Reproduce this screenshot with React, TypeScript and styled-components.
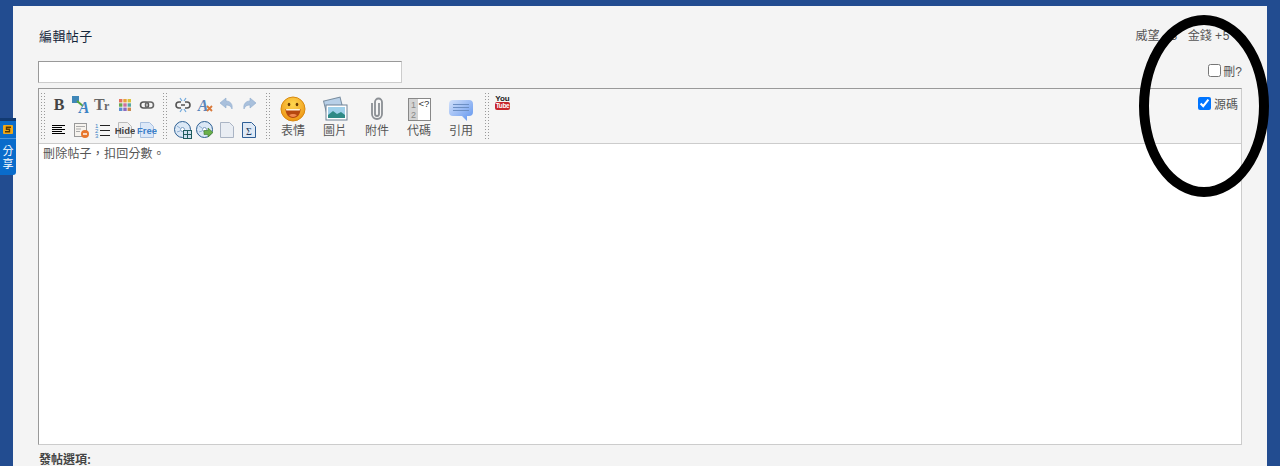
import React from 'react';
import styled, { createGlobalStyle } from 'styled-components';

const GlobalStyle = createGlobalStyle`
    html, body {
        margin: 0;
        padding: 0;
        height: 466px;
        overflow: hidden;
        background: #224c90;
    }
    body, input {
        font-family: "Liberation Sans", "Noto Sans CJK TC", sans-serif;
        font-size: 12px;
        color: #444;
    }
`;

const Page = styled.div`
    height: 466px;
    padding: 6px 13px 0;
    box-sizing: border-box;
    overflow: hidden;
`;

const Panel = styled.main`
    height: 460px;
    padding: 0 25px;
    background: #f4f4f4;
    overflow: hidden;
`;

const Header = styled.header`
    display: flex;
    justify-content: space-between;
    align-items: flex-start;
    height: 55px;
    box-sizing: border-box;
    padding: 22px 0 0 1px;
    line-height: 16px;
`;

const Title = styled.h1`
    margin: 1px 0 0;
    font-size: 13px;
    line-height: 16px;
    font-weight: normal;
    letter-spacing: 0.4px;
    color: #14263c;
`;

const Credits = styled.div`
    display: flex;
    gap: 10px;
    padding-right: 12px;
    color: #555;
`;

const CreditValue = styled.span`
    letter-spacing: 0.6px;
`;

const SubjectRow = styled.div`
    display: flex;
    justify-content: space-between;
    align-items: center;
    height: 22px;
    margin-bottom: 5px;
`;

const SubjectInput = styled.input`
    width: 364px;
    height: 22px;
    box-sizing: border-box;
    border: 1px solid #ccc;
    border-top-color: #999;
    border-left-color: #999;
    background: #fff;
    padding: 0 4px;
    outline: none;
`;

const CheckLabel = styled.label`
    display: flex;
    align-items: center;
    gap: 3px;
    color: #555;
`;

const DeleteToggle = styled(CheckLabel)`
    gap: 2px;
    margin-bottom: 3px;
`;

const CheckBox = styled.input`
    width: 13px;
    height: 13px;
    margin: 0;
`;

const Editor = styled.section`
    width: 1204px;
    height: 357px;
    box-sizing: border-box;
    border: 1px solid #ccc;
    border-top-color: #999;
    border-left-color: #999;
    display: flex;
    flex-direction: column;
`;

const Toolbar = styled.div`
    height: 55px;
    flex: none;
    box-sizing: border-box;
    display: flex;
    align-items: stretch;
    padding: 3px 3px 0 2px;
    background: #f5f5f5;
    border-bottom: 1px solid #ccc;
`;

const Grip = styled.span<{ $left: number; $right: number }>`
    width: 4px;
    height: 46px;
    margin: 1px ${(p) => p.$right}px 0 ${(p) => p.$left}px;
    flex: none;
    background-image: radial-gradient(circle at 0.5px 0.5px, #9a9a9a 0.7px, transparent 0.8px);
    background-size: 3px 3px;
`;

const SmallGroup = styled.div<{ $cols: number }>`
    display: grid;
    grid-template-columns: repeat(${(p) => p.$cols}, 22px);
    grid-auto-rows: 25px;
`;

const SmallCell = styled.span`
    display: flex;
    align-items: center;
    justify-content: center;
`;

const BigGroup = styled.div`
    display: flex;
`;

const BigButton = styled.span`
    width: 42px;
    display: flex;
    flex-direction: column;
    align-items: center;
    gap: 2px;
    color: #555;
    line-height: 14px;
    padding-top: 3px;
`;

const BigIcon = styled.span`
    height: 27px;
    display: flex;
    align-items: center;
`;

const YouTube = styled.span`
    width: 15px;
    display: flex;
    flex-direction: column;
    align-items: center;
    font-weight: bold;
    font-size: 8px;
    line-height: 7px;
    color: #222;
    margin-top: 3px;
`;

const TubeBadge = styled.span`
    display: block;
    background: #c8262c;
    color: #fff;
    font-size: 6.5px;
    letter-spacing: -0.4px;
    line-height: 8px;
    padding: 0 1px;
    border-radius: 2px;
`;

const SourceToggle = styled(CheckLabel)`
    margin-left: auto;
    align-self: flex-start;
    height: 14px;
    margin-top: 4px;
`;

const Body = styled.div`
    flex: 1;
    background: #fff;
    padding: 2px 4px;
    line-height: 16px;
    letter-spacing: 0.2px;
    color: #555;
`;

const OptionsTitle = styled.h2`
    margin: 8px 0 0;
    padding-left: 1px;
    font-size: 12px;
    line-height: 14px;
    font-weight: bold;
    color: #444;
`;

const ShareTab = styled.aside`
    position: absolute;
    left: 0;
    top: 118px;
    width: 16px;
    height: 57px;
    box-sizing: border-box;
    border-top: 3px solid #123a72;
    border-radius: 0 0 3px 0;
    background: #0a6ccb;
    color: #fff;
    display: flex;
    flex-direction: column;
    align-items: center;
    font-size: 11px;
    line-height: 13px;
`;

const ShareLogo = styled.span`
    display: flex;
    align-items: center;
    justify-content: center;
    width: 100%;
    height: 17px;
    border-bottom: 1px solid #4b95dc;
    margin-bottom: 6px;
`;

const Annotation = styled.div`
    position: absolute;
    left: 1139px;
    top: 15px;
    width: 130px;
    height: 182px;
    box-sizing: border-box;
    border: 10px solid #000;
    border-radius: 50%;
    pointer-events: none;
`;

const Svg = ({ w = 20, h = 20, children }: { w?: number; h?: number; children: React.ReactNode }) => (
    <svg width={w} height={h} viewBox={`0 0 ${w} ${h}`}>
        {children}
    </svg>
);

const Disc = () => (
    <>
        <circle cx="9.500" cy="9.500" r="8" fill="#dbe8f6" stroke="#2c5f92" />
        <circle cx="9.500" cy="9.500" r="2" fill="#fff" stroke="#7a9cc0" />
        <path d="M4 6l3 2M4 12l3-1" stroke="#8fb0d4" />
    </>
);

const Doc = ({ fill, stroke }: { fill: string; stroke: string }) => (
    <path d="M3.500 2.500h9l4 4v11h-13z" fill={fill} stroke={stroke} />
);

const firstGroup: React.ReactNode[] = [
    <Svg key="bold">
        <text x="10" y="15" textAnchor="middle" fontFamily="Liberation Serif" fontWeight="bold" fontSize="16" fill="#444">B</text>
    </Svg>,
    <Svg key="translate">
        <rect x="1" y="1" width="7" height="7" fill="#3f87b8" />
        <path d="M6 6l6 5" stroke="#5aa63c" strokeWidth="2" />
        <text x="13" y="18" textAnchor="middle" fontFamily="Liberation Serif" fontWeight="bold" fontStyle="italic" fontSize="16" fill="#3c83c4">A</text>
    </Svg>,
    <Svg key="size">
        <text x="1" y="15" fontFamily="Liberation Serif" fontWeight="bold" fontSize="16" fill="#666">T</text>
        <text x="11" y="15" fontFamily="Liberation Serif" fontWeight="bold" fontSize="12" fill="#666">r</text>
    </Svg>,
    <Svg key="color">
        {['#e2705c', '#e8a33c', '#d8c23c', '#6aa84f', '#cc6fa0', '#58a8a0', '#5c8fd0', '#8a6cc0', '#c88a50'].map((c, i) => (
            <rect key={c} x={4 + (i % 3) * 4.3} y={4 + Math.floor(i / 3) * 4.3} width="3.4" height="3.4" fill={c} />
        ))}
    </Svg>,
    <Svg key="link">
        <rect x="3.500" y="7" width="8" height="6" rx="3" fill="none" stroke="#555" strokeWidth="1.6" />
        <rect x="8.500" y="7" width="8" height="6" rx="3" fill="none" stroke="#666" strokeWidth="1.6" />
    </Svg>,
    <Svg key="align">
        <path d="M3 5.500h13M3 7.500h10M3 9.500h13M3 11.500h10M3 13.500h13" stroke="#000" shapeRendering="crispEdges" />
    </Svg>,
    <Svg key="delete">
        <rect x="3.500" y="3.500" width="12" height="13" fill="#f6f3ee" stroke="#999" />
        <path d="M5 6.500h9M5 9h5M5 11.500h4" stroke="#aaa" />
        <circle cx="14" cy="14" r="4" fill="#e8762c" />
        <path d="M12 14h4" stroke="#fff" strokeWidth="1.4" />
    </Svg>,
    <Svg key="ordered">
        <text x="2" y="8" fontFamily="Liberation Sans" fontSize="6" fill="#3c83c4">1</text>
        <text x="2" y="13" fontFamily="Liberation Sans" fontSize="6" fill="#3c83c4">2</text>
        <text x="2" y="18" fontFamily="Liberation Sans" fontSize="6" fill="#3c83c4">3</text>
        <path d="M7 5.500h10M7 10.500h10M7 15.500h10" stroke="#222" />
    </Svg>,
    <Svg key="hide">
        <Doc fill="#f0f0f0" stroke="#bbb" />
        <text x="10" y="14" textAnchor="middle" fontFamily="Liberation Sans" fontWeight="bold" fontSize="9.5" fill="#444">Hide</text>
    </Svg>,
    <Svg key="free">
        <Doc fill="#dce8f8" stroke="#a8c0e0" />
        <text x="10" y="14" textAnchor="middle" fontFamily="Liberation Sans" fontWeight="bold" fontSize="9.5" fill="#3c7fc8">Free</text>
    </Svg>,
];

const secondGroup: React.ReactNode[] = [
    <Svg key="unlink">
        <path d="M8 7H6a3 3 0 0 0 0 6h2M12 7h2a3 3 0 0 1 0 6h-2M8 10h4" fill="none" stroke="#555" strokeWidth="1.6" />
        <path d="M7 3l2 3M13 3l-2 3M7 17l2-3M13 17l-2-3" stroke="#6fa8dc" strokeWidth="1.2" />
    </Svg>,
    <Svg key="removeformat">
        <text x="8" y="16" textAnchor="middle" fontFamily="Liberation Serif" fontWeight="bold" fontStyle="italic" fontSize="16" fill="#5a86bb">A</text>
        <path d="M12 11l5 5M17 11l-5 5" stroke="#d9793a" strokeWidth="1.8" />
    </Svg>,
    <Svg key="undo">
        <path d="M9 3L3 8l6 5v-3c3 0 5 1 6 4 1-5-2-8-6-8z" fill="#a9c0dc" stroke="#8fabcd" strokeWidth="0.6" />
    </Svg>,
    <Svg key="redo">
        <path d="M11 3l6 5-6 5v-3c-3 0-5 1-6 4-1-5 2-8 6-8z" fill="#a9c0dc" stroke="#8fabcd" strokeWidth="0.6" />
    </Svg>,
    <Svg key="discgrid">
        <Disc />
        <rect x="10.500" y="10.500" width="8" height="8" fill="#cfe0f0" stroke="#1f5c5c" />
        <path d="M14.500 10v8M10 14.500h8" stroke="#1f5c5c" />
    </Svg>,
    <Svg key="discplay">
        <Disc />
        <path d="M9 10.500h4V8l5 4.500-5 4.500v-2.500H9z" fill="#6ab04a" stroke="#3d7a2a" strokeWidth="0.6" />
    </Svg>,
    <Svg key="blank">
        <Doc fill="#e9edf3" stroke="#aab4c4" />
    </Svg>,
    <Svg key="sigma">
        <Doc fill="#dfe9f5" stroke="#2f5f96" />
        <text x="10" y="15" textAnchor="middle" fontFamily="Liberation Serif" fontSize="10" fill="#223a5c">Σ</text>
    </Svg>,
];

const Smiley = () => (
    <Svg w={26} h={26}>
        <defs>
            <radialGradient id="face" cx="50%" cy="30%" r="75%">
                <stop offset="0%" stopColor="#ffd850" />
                <stop offset="100%" stopColor="#ec8f10" />
            </radialGradient>
        </defs>
        <circle cx="13" cy="13" r="12" fill="url(#face)" stroke="#d88a10" />
        <ellipse cx="9" cy="8.500" rx="1.300" ry="1.800" fill="#6a3a00" />
        <ellipse cx="17" cy="8.500" rx="1.300" ry="1.800" fill="#6a3a00" />
        <path d="M5.500 13h15c0 5-3 9-7.500 9s-7.500-4-7.500-9z" fill="#b5480f" />
        <path d="M6 13h14l-.3 1.500H6.300z" fill="#fff3d8" />
        <path d="M9 19c2-1.500 6-1.500 8 0-2 2.500-6 2.500-8 0z" fill="#f08a50" />
    </Svg>
);

const Photos = () => (
    <Svg w={26} h={26}>
        <rect x="3" y="3" width="17" height="14" transform="rotate(-14 11 10)" fill="#b8d0e8" stroke="#7b8ea0" />
        <rect x="4" y="9" width="21" height="15" fill="#fff" stroke="#6f8296" />
        <rect x="6" y="11" width="17" height="11" fill="#9fd0ea" />
        <path d="M6 19l5-4 4 3 4-2 4 3v3H6z" fill="#2f8a86" />
    </Svg>
);

const Paperclip = () => (
    <Svg w={22} h={26}>
        <path d="M6 7v11a5 5 0 0 0 10 0V6a3.500 3.500 0 0 0-7 0v12a2 2 0 0 0 4 0V7" fill="none" stroke="#8b8f94" strokeWidth="1.8" />
    </Svg>
);

const CodeIcon = () => (
    <Svg w={24} h={26}>
        <rect x="1.500" y="2.500" width="22" height="22" fill="#fff" stroke="#888" />
        <rect x="2" y="3" width="9" height="21" fill="#d4d4d4" />
        <text x="4" y="12" fontFamily="Liberation Sans" fontSize="9" fill="#888">1</text>
        <text x="4" y="22" fontFamily="Liberation Sans" fontSize="9" fill="#888">2</text>
        <text x="11.500" y="11" fontFamily="Liberation Sans" fontSize="9.5" fill="#333">&lt;?</text>
    </Svg>
);

const QuoteBubble = () => (
    <Svg w={26} h={26}>
        <defs>
            <linearGradient id="bubble" x1="0" y1="0" x2="1" y2="1">
                <stop offset="0%" stopColor="#d4e2fb" />
                <stop offset="100%" stopColor="#5f94ee" />
            </linearGradient>
        </defs>
        <path d="M5 4h16a4 4 0 0 1 4 4v8a4 4 0 0 1-4 4h-2v5l-5-5H5a4 4 0 0 1-4-4V8a4 4 0 0 1 4-4z" fill="url(#bubble)" />
        <path d="M5 8.500h16M5 11.500h16M5 14.500h16" stroke="#6c8fc4" />
    </Svg>
);

const bigButtons = [
    { label: '表情', icon: <Smiley /> },
    { label: '圖片', icon: <Photos /> },
    { label: '附件', icon: <Paperclip /> },
    { label: '代碼', icon: <CodeIcon /> },
    { label: '引用', icon: <QuoteBubble /> },
];

function App() {
    return (
        <>
            <GlobalStyle />
            <Page lang="zh-TW">
                <Panel>
                    <Header>
                        <Title>編輯帖子</Title>
                        <Credits>
                            <span>
                                威望 <CreditValue>+3</CreditValue>
                            </span>
                            <span>
                                金錢 <CreditValue>+5</CreditValue>
                            </span>
                        </Credits>
                    </Header>
                    <SubjectRow>
                        <SubjectInput type="text" />
                        <DeleteToggle>
                            <CheckBox type="checkbox" />
                            刪?
                        </DeleteToggle>
                    </SubjectRow>
                    <Editor>
                        <Toolbar>
                            <Grip $left={0} $right={3} />
                            <SmallGroup $cols={5}>
                                {firstGroup.map((icon, i) => (
                                    <SmallCell key={i}>{icon}</SmallCell>
                                ))}
                            </SmallGroup>
                            <Grip $left={5} $right={5} />
                            <SmallGroup $cols={4}>
                                {secondGroup.map((icon, i) => (
                                    <SmallCell key={i}>{icon}</SmallCell>
                                ))}
                            </SmallGroup>
                            <Grip $left={6} $right={2} />
                            <BigGroup>
                                {bigButtons.map((b) => (
                                    <BigButton key={b.label}>
                                        <BigIcon>{b.icon}</BigIcon>
                                        {b.label}
                                    </BigButton>
                                ))}
                            </BigGroup>
                            <Grip $left={3} $right={6} />
                            <YouTube lang="en">
                                You
                                <TubeBadge>Tube</TubeBadge>
                            </YouTube>
                            <SourceToggle>
                                <CheckBox type="checkbox" defaultChecked />
                                源碼
                            </SourceToggle>
                        </Toolbar>
                        <Body>刪除帖子，扣回分數。</Body>
                    </Editor>
                    <OptionsTitle>發帖選項:</OptionsTitle>
                </Panel>
            </Page>
            <ShareTab lang="zh-TW">
                <ShareLogo>
                    <svg width="10" height="9" viewBox="0 0 10 9">
                        <rect width="10" height="9" rx="1" fill="#f0a818" />
                        <path d="M8 2.200H3.500v2h3v2.500H2" fill="none" stroke="#5a3a00" strokeWidth="1.4" />
                    </svg>
                </ShareLogo>
                <span>分</span>
                <span>享</span>
            </ShareTab>
            <Annotation />
        </>
    );
}

export default App;
